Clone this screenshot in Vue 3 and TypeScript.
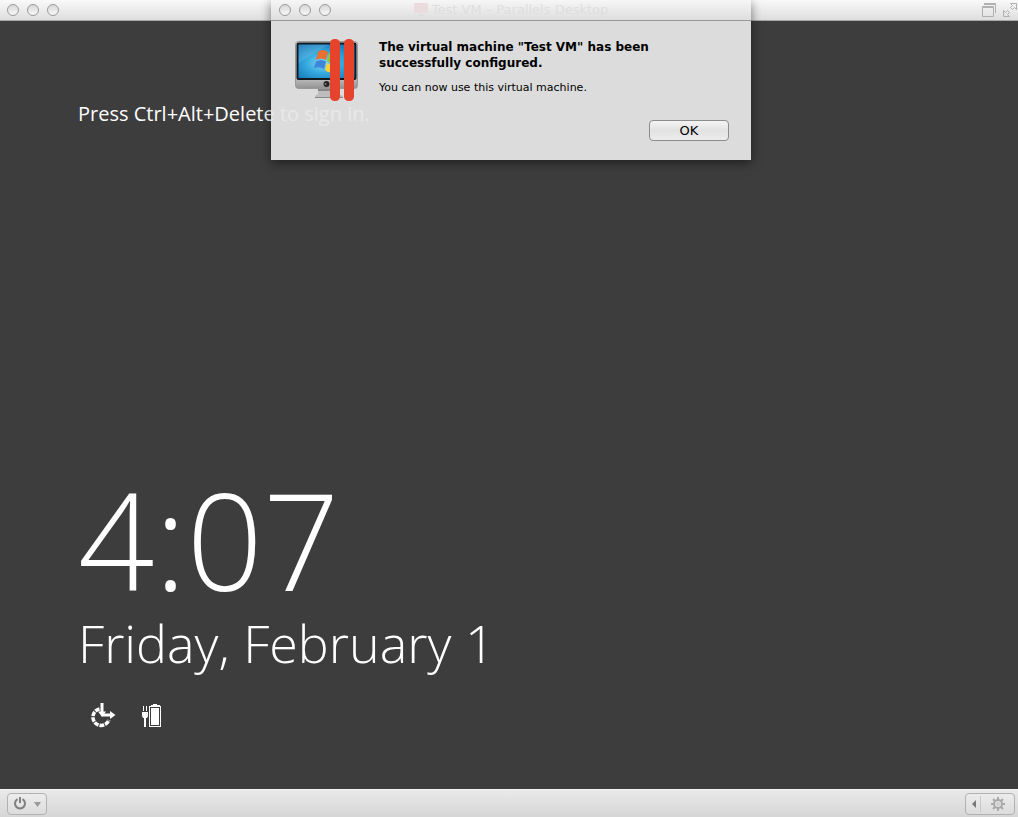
<script setup lang="ts">
import { ref } from 'vue'

const vmName = 'Test VM'
const dialogOpen = ref(true)
const windowButtons = ['Close', 'Minimize', 'Zoom']
const gearTeeth = [0, 45, 90, 135, 180, 225, 270, 315]
</script>

<template>
  <div class="window">
    <header class="titlebar">
      <div class="lights">
        <button v-for="name in windowButtons" :key="name" class="light" type="button" :aria-label="name"></button>
      </div>
      <div class="view-buttons">
        <button class="plain" type="button" aria-label="Coherence">
          <svg width="16" height="16" viewBox="0 0 16 16" fill="none" stroke="#b0b0b0">
            <path d="M3 1.500H14.500V11M3 2.500H14" />
            <path d="M1.500 4.500H12.500V14.500H1.500ZM1.500 5.500H12.500" />
          </svg>
        </button>
        <button class="plain" type="button" aria-label="Full screen">
          <svg width="15" height="16" viewBox="0 0 15 16" fill="none" stroke="#b0b0b0">
            <path d="M7.500 1.500H13.500V7.500L11.500 5.500L9.500 7.500L7.500 5.500L9.500 3.500Z" />
            <path d="M0.500 8.500L2.500 10.500L4.500 8.500L6.500 10.500L4.500 12.500L6.500 14.500H0.500Z" />
          </svg>
        </button>
      </div>
    </header>

    <main class="screen">
      <p class="prompt">Press Ctrl+Alt+Delete to sign in.</p>
      <section class="lock">
        <div class="time">4:07</div>
        <div class="date">Friday, February 1</div>
        <div class="status">
          <svg width="26" height="26" viewBox="0 0 26 26" fill="none" stroke="#fff" role="img" aria-label="Network">
            <path d="M9.500 6A8.300 8.300 0 1 0 19 17" stroke-width="3.500" stroke-dasharray="4.600 1" />
            <path d="M12 0V11M12 12H21" stroke-width="3" />
            <path d="M8 8.500H16L12 14ZM20 8L25.500 12L20 16Z" fill="#fff" stroke="none" />
          </svg>
          <svg width="20" height="24" viewBox="0 0 20 24" fill="#fff" role="img" aria-label="Battery charging">
            <path d="M1 3H2V8H1ZM4 3H5V8H4ZM0 9H6V13L5 15H4V24H2V15H1L0 13Z" />
            <path d="M11 1H15V2H18V3H19V24H7V3H9V2H11ZM8 4V23H18V4Z" fill-rule="evenodd" />
            <path d="M9 5H17V22H9Z" />
          </svg>
        </div>
      </section>
    </main>

    <footer class="toolbar">
      <button class="tool power" type="button" aria-label="Power">
        <svg width="38" height="20" viewBox="0 0 38 20" fill="none">
          <path d="M9.500 5.200A5 5 0 1 0 14.500 5.200M12 3V9" stroke="#808080" stroke-width="2" />
          <path d="M26 8H33L29.500 13Z" fill="#999" />
        </svg>
      </button>
      <button class="tool settings" type="button" aria-label="Settings">
        <svg width="48" height="20" viewBox="0 0 48 20">
          <path d="M10 6V14L6 10Z" fill="#777" />
          <path d="M14.500 2V18" stroke="#c8c8c8" />
          <g transform="translate(32 10)">
            <circle r="4" fill="none" stroke="#a9a9a9" stroke-width="2" />
            <rect v-for="angle in gearTeeth" :key="angle" x="-1" y="-7" width="2" height="3" fill="#a9a9a9" :transform="`rotate(${angle})`" />
            <circle r="2" fill="#cfcfcf" />
          </g>
        </svg>
      </button>
    </footer>

    <div v-if="dialogOpen" class="dialog" role="alertdialog" aria-labelledby="dialog-heading" aria-describedby="dialog-text">
      <div class="dialog-bar">
        <div class="lights">
          <button v-for="name in windowButtons" :key="name" class="light" type="button" :aria-label="name"></button>
        </div>
        <div class="dialog-title">
          <svg width="14" height="14" viewBox="0 0 14 14">
            <rect width="14" height="10" rx="1" fill="#eadcdc" />
            <path d="M4 11H10V13H4Z" fill="#dedede" />
          </svg>
          <span>{{ vmName }} – Parallels Desktop</span>
        </div>
      </div>
      <div class="dialog-body">
        <svg class="logo" width="64" height="64" viewBox="0 0 64 64" role="img" aria-label="Parallels Desktop">
          <defs>
            <linearGradient id="metal" x1="0" y1="0" x2="0" y2="1">
              <stop offset="0" stop-color="#d6d6d6" />
              <stop offset="0.750" stop-color="#c4c4c4" />
              <stop offset="1" stop-color="#929292" />
            </linearGradient>
            <radialGradient id="sky" cx="0.450" cy="0.550" r="0.700">
              <stop offset="0" stop-color="#86d9f7" />
              <stop offset="0.450" stop-color="#35a9de" />
              <stop offset="1" stop-color="#0e6fb4" />
            </radialGradient>
          </defs>
          <path d="M23 49H42L43 55L48 57V59H20V57L23 55Z" fill="#bdbdbd" />
          <path d="M23 49H42V52H23Z" fill="#858585" />
          <path d="M20 58.500H48" stroke="#888" />
          <rect x="0.500" y="2.500" width="62" height="47" rx="3" fill="url(#metal)" stroke="#999" />
          <rect x="1.500" y="3.500" width="60" height="37.500" rx="2" fill="#101820" />
          <rect x="3.500" y="5.500" width="56" height="33.500" fill="url(#sky)" />
          <path d="M3.500 5.500H34L3.500 24Z" fill="#fff" opacity="0.120" />
          <path d="M23 13Q27 9 33 13L31 21Q26 18 21 21Z" fill="#e96f32" />
          <path d="M34 14Q38 17 43 14L41 23Q36 26 32 22Z" fill="#8cc63f" />
          <path d="M21 22.500Q26 19.500 31 22.500L29 30Q24 27 19 29Z" fill="#3d86d8" />
          <path d="M32 24Q36 27 41 24L39 32Q34 35 30 31Z" fill="#fbd03b" />
          <circle cx="31.500" cy="45" r="3" fill="#252525" />
          <circle cx="30.500" cy="45" r="1" fill="#777" />
          <rect x="35" y="0" width="10" height="62" rx="4.500" fill="#e6432d" />
          <rect x="49" y="0" width="10" height="62" rx="4.500" fill="#e6432d" />
        </svg>
        <div class="message">
          <h1 id="dialog-heading">The virtual machine "{{ vmName }}" has been successfully configured.</h1>
          <p id="dialog-text">You can now use this virtual machine.</p>
          <button class="ok" type="button" @click="dialogOpen = false">OK</button>
        </div>
      </div>
    </div>
  </div>
</template>

<style>
body {
  margin: 0;
}
</style>

<style scoped>
.window {
  position: relative;
  display: flex;
  flex-direction: column;
  min-height: 100vh;
  overflow: hidden;
  background: #3d3d3d;
  font-family: "DejaVu Sans", sans-serif;
}

button {
  box-sizing: border-box;
  margin: 0;
  padding: 0;
  font-family: inherit;
}

svg {
  display: block;
}

.titlebar {
  display: flex;
  align-items: center;
  justify-content: space-between;
  box-sizing: border-box;
  height: 21px;
  padding-left: 7px;
  border-bottom: 1px solid #a8a8a8;
  background: linear-gradient(#f9f9f9, #dedede);
}

.lights {
  display: flex;
  gap: 8px;
}

.light {
  width: 12px;
  height: 12px;
  border: 1px solid #999;
  border-radius: 50%;
  background: linear-gradient(#d8d8d8, #f8f8f8);
}

.view-buttons {
  display: flex;
  gap: 6px;
}

.plain {
  border: 0;
  background: none;
}

.screen {
  display: flex;
  flex: 1;
  flex-direction: column;
  justify-content: space-between;
  padding: 78px 78px 60px;
  color: #fff;
  font-family: "Open Sans", sans-serif;
}

.prompt {
  margin: 0;
  font-size: 20px;
  font-weight: 400;
  line-height: 30px;
}

.time {
  font-size: 134px;
  font-weight: 300;
  line-height: 136px;
}

.date {
  font-size: 52px;
  font-weight: 300;
  line-height: 72px;
}

.status {
  display: flex;
  gap: 26px;
  padding: 24px 0 0 12px;
}

.toolbar {
  display: flex;
  align-items: center;
  justify-content: space-between;
  box-sizing: border-box;
  height: 28px;
  padding: 1px 3px 0 7px;
  border-top: 1px solid #f4f4f4;
  background: linear-gradient(#e9e9e9, #d6d6d6);
}

.tool {
  height: 22px;
  border: 1px solid #b2b2b2;
  border-radius: 4px;
  background: linear-gradient(#ececec, #dcdcdc);
}

.dialog {
  position: absolute;
  top: 0;
  left: calc(50% + 2px);
  width: 480px;
  transform: translateX(-50%);
  box-shadow: 0 3px 10px rgba(0, 0, 0, 0.5);
}

.dialog-bar {
  display: grid;
  grid-template-columns: 1fr auto 1fr;
  align-items: center;
  box-sizing: border-box;
  height: 21px;
  padding: 0 8px;
  border-bottom: 1px solid #999;
  background: linear-gradient(#f6f6f6, #dedede);
}

.dialog-title {
  display: flex;
  align-items: center;
  gap: 4px;
  color: #dedede;
  font-size: 13px;
  line-height: 20px;
}

.dialog-body {
  display: flex;
  gap: 20px;
  padding: 18px 22px 19px 24px;
  background: rgba(231, 231, 231, 0.94);
}

.logo {
  flex: none;
}

.message {
  display: flex;
  flex: 1;
  flex-direction: column;
  color: #000;
}

h1 {
  max-width: 290px;
  margin: 0;
  font-size: 12px;
  font-weight: 700;
  line-height: 16px;
}

p {
  margin: 0;
}

.message p {
  margin-top: 8px;
  font-size: 11px;
  line-height: 18px;
}

.ok {
  align-self: flex-end;
  width: 80px;
  height: 21px;
  margin-top: 23px;
  border: 1px solid #8c8c8c;
  border-radius: 4px;
  background: linear-gradient(#f4f4f4, #e2e2e2 50%, #ececec);
  color: #000;
  font-size: 13px;
  line-height: 18px;
}
</style>
